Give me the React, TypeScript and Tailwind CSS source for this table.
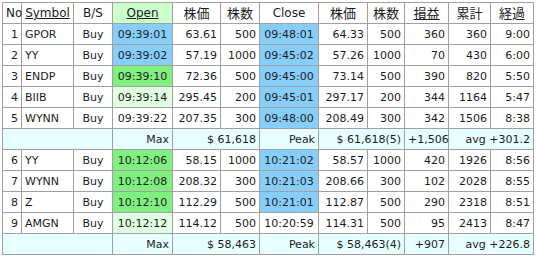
import React from "react";

type Row = {
  no: number;
  sym: string;
  open: string;
  openBg: string;
  p1: string;
  q1: string;
  close: string;
  closeBg: string;
  p2: string;
  q2: string;
  pl: string;
  cum: string;
  dur: string;
};

const BLUE = "bg-[#87cefa]";
const GREEN = "bg-[#80f080]";
const PALE = "bg-[#e0ffe0]";
const NONE = "bg-white";

const group1: Row[] = [
  { no: 1, sym: "GPOR", open: "09:39:01", openBg: BLUE, p1: "63.61", q1: "500", close: "09:48:01", closeBg: BLUE, p2: "64.33", q2: "500", pl: "360", cum: "360", dur: "9:00" },
  { no: 2, sym: "YY", open: "09:39:02", openBg: BLUE, p1: "57.19", q1: "1000", close: "09:45:02", closeBg: BLUE, p2: "57.26", q2: "1000", pl: "70", cum: "430", dur: "6:00" },
  { no: 3, sym: "ENDP", open: "09:39:10", openBg: GREEN, p1: "72.36", q1: "500", close: "09:45:00", closeBg: BLUE, p2: "73.14", q2: "500", pl: "390", cum: "820", dur: "5:50" },
  { no: 4, sym: "BIIB", open: "09:39:14", openBg: PALE, p1: "295.45", q1: "200", close: "09:45:01", closeBg: BLUE, p2: "297.17", q2: "200", pl: "344", cum: "1164", dur: "5:47" },
  { no: 5, sym: "WYNN", open: "09:39:22", openBg: NONE, p1: "207.35", q1: "300", close: "09:48:00", closeBg: BLUE, p2: "208.49", q2: "300", pl: "342", cum: "1506", dur: "8:38" },
];

const group2: Row[] = [
  { no: 6, sym: "YY", open: "10:12:06", openBg: GREEN, p1: "58.15", q1: "1000", close: "10:21:02", closeBg: BLUE, p2: "58.57", q2: "1000", pl: "420", cum: "1926", dur: "8:56" },
  { no: 7, sym: "WYNN", open: "10:12:08", openBg: GREEN, p1: "208.32", q1: "300", close: "10:21:03", closeBg: BLUE, p2: "208.66", q2: "300", pl: "102", cum: "2028", dur: "8:55" },
  { no: 8, sym: "Z", open: "10:12:10", openBg: GREEN, p1: "112.29", q1: "500", close: "10:21:01", closeBg: BLUE, p2: "112.87", q2: "500", pl: "290", cum: "2318", dur: "8:51" },
  { no: 9, sym: "AMGN", open: "10:12:12", openBg: PALE, p1: "114.12", q1: "500", close: "10:20:59", closeBg: NONE, p2: "114.31", q2: "500", pl: "95", cum: "2413", dur: "8:47" },
];

// shared cell style
const td = "border border-[#a0a0a0] h-[21px] px-[3px] py-0 leading-none whitespace-nowrap";
const th = `${td} font-normal text-center`;
const kanji = `${th} text-[13px]`;

const TradeRow = ({ r }: { r: Row }) => (
  <tr>
    <td className={`${td} text-right`}>{r.no}</td>
    <td className={`${td} text-left`}>{r.sym}</td>
    <td className={`${td} text-center`}>Buy</td>
    <td className={`${td} text-center ${r.openBg}`}>{r.open}</td>
    <td className={`${td} text-right`}>{r.p1}</td>
    <td className={`${td} text-right`}>{r.q1}</td>
    <td className={`${td} text-center ${r.closeBg}`}>{r.close}</td>
    <td className={`${td} text-right`}>{r.p2}</td>
    <td className={`${td} text-right`}>{r.q2}</td>
    <td className={`${td} text-right`}>{r.pl}</td>
    <td className={`${td} text-right`}>{r.cum}</td>
    <td className={`${td} text-right`}>{r.dur}</td>
  </tr>
);

const SummaryRow = ({ max, peak, total, avg }: { max: string; peak: string; total: string; avg: string }) => (
  <tr className="bg-[#e8ffff]">
    <td className={td} colSpan={3}></td>
    <td className={`${td} text-right`}>Max</td>
    <td className={`${td} text-right`} colSpan={2}>{max}</td>
    <td className={`${td} text-right`}>Peak</td>
    <td className={`${td} text-right`} colSpan={2}>{peak}</td>
    <td className={`${td} text-right`}>{total}</td>
    <td className={`${td} text-right`} colSpan={2}>{avg}</td>
  </tr>
);

export default function App() {
  const widths = [19, 52, 39, 60, 48, 39, 59, 49, 37, 44, 42, 43];
  return (
    <div className="w-[537px] h-[258px] bg-white p-[2px] text-[#1c1c1c] text-[11px] font-['DejaVu_Sans','Noto_Sans_CJK_JP',sans-serif]">
      <table className="table-fixed border-collapse w-[532px] border border-[#a0a0a0]">
        <colgroup>
          {widths.map((w, i) => (
            <col key={i} style={{ width: w }} />
          ))}
        </colgroup>
        <thead>
          <tr className="bg-white">
            <th className={`${td} font-normal text-left px-[1px] text-[12px]`}>No</th>
            <th className={`${th} underline text-[12px]`}>Symbol</th>
            <th className={`${th} text-[12px]`}>B/S</th>
            <th className={`${th} underline bg-[#ccffcc] text-[12px]`}>Open</th>
            <th className={kanji}>株価</th>
            <th className={kanji}>株数</th>
            <th className={`${th} text-[12px]`}>Close</th>
            <th className={kanji}>株価</th>
            <th className={kanji}>株数</th>
            <th className={`${kanji} underline`}>損益</th>
            <th className={kanji}>累計</th>
            <th className={kanji}>経過</th>
          </tr>
        </thead>
        <tbody>
          {group1.map((r) => (
            <TradeRow key={r.no} r={r} />
          ))}
          <SummaryRow max="$ 61,618" peak="$ 61,618(5)" total="+1,506" avg="avg +301.2" />
          {group2.map((r) => (
            <TradeRow key={r.no} r={r} />
          ))}
          <SummaryRow max="$ 58,463" peak="$ 58,463(4)" total="+907" avg="avg +226.8" />
        </tbody>
      </table>
    </div>
  );
}
